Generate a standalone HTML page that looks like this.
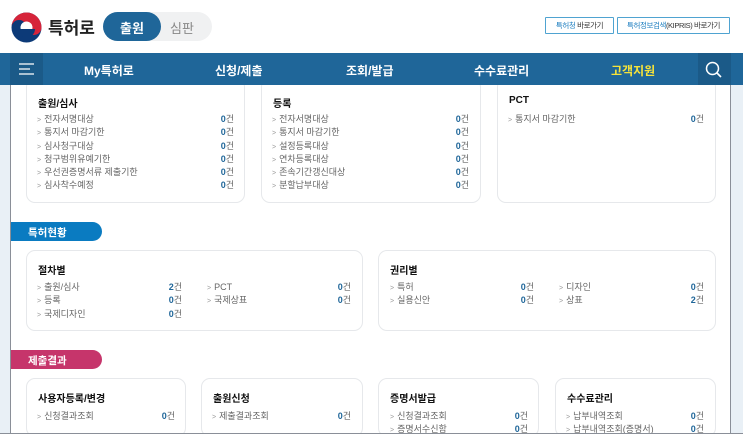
<!DOCTYPE html>
<html><head><meta charset="utf-8"><style>
*{margin:0;padding:0;box-sizing:border-box}
html{width:743px;height:437px;overflow:hidden}
body{width:743px;height:437px;overflow:hidden;background:#fff;font-family:"Liberation Sans","Noto Sans CJK KR",sans-serif;position:relative}
.abs{position:absolute}
.nav{left:0;top:53px;width:743px;height:32px;background:#1f6699;z-index:5}
.nav span{position:absolute;top:9px;color:#fff;font-size:12px;font-weight:bold}
.side{background:#e9f0f6;top:85px;height:348px}
.panel{left:10px;top:85px;width:721px;height:348px;background:#fff;border-left:1px solid #8a8f98;border-right:1px solid #8a8f98}
.card{position:absolute;border:1px solid #e6e8eb;border-radius:9px;background:#fff}
.card h4{position:absolute;left:11px;font-size:10px;color:#111;font-weight:bold}
.row{position:absolute;font-size:9px;color:#666;white-space:nowrap}
.row i{font-style:normal;color:#999;font-size:7px;margin-right:3px}
.row span,.num span{display:block;height:13.3px;line-height:13.3px}
.num{position:absolute;font-size:9px;color:#666;text-align:right}
.num b{color:#1f6699}
.pill{position:absolute;left:11px;width:91px;height:19px;border-radius:0 10px 10px 0;color:#fff;font-size:10.5px;font-weight:bold;padding:3px 0 0 17px}
.btn{position:absolute;top:17px;height:17px;border:1px solid #4fa3d1;font-size:7.5px;color:#333;padding:0 2px;line-height:15px;border-radius:1px;white-space:nowrap;letter-spacing:-0.4px;text-align:center}
.btn em{font-style:normal;color:#1f7fc0}
</style></head><body>
<div class="abs side" style="left:0;width:10px"></div>
<div class="abs side" style="left:731px;width:12px"></div>
<div class="abs panel"></div>

<div class="card" style="left:26px;top:78px;width:219px;height:125px"><h4 style="top:16px">출원/심사</h4></div>
<div class="card" style="left:261px;top:78px;width:220px;height:125px"><h4 style="top:16px">등록</h4></div>
<div class="card" style="left:497px;top:78px;width:219px;height:125px"><h4 style="top:16px">PCT</h4></div>

<div class="pill" style="top:222px;background:#0a7bc1">특허현황</div>
<div class="card" style="left:26px;top:250px;width:337px;height:81px"><h4 style="top:11px">절차별</h4></div>
<div class="card" style="left:378px;top:250px;width:338px;height:81px"><h4 style="top:11px">권리별</h4></div>

<div class="pill" style="top:350px;background:#c6356b">제출결과</div>
<div class="card" style="left:26px;top:378px;width:160px;height:59px"><h4 style="top:11px">사용자등록/변경</h4></div>
<div class="card" style="left:201px;top:378px;width:162px;height:59px"><h4 style="top:11px">출원신청</h4></div>
<div class="card" style="left:378px;top:378px;width:161px;height:59px"><h4 style="top:11px">증명서발급</h4></div>
<div class="card" style="left:555px;top:378px;width:161px;height:59px"><h4 style="top:11px">수수료관리</h4></div>

<div class="row" style="left:37px;top:113px"><span><i>&gt;</i>전자서명대상</span><span><i>&gt;</i>통지서 마감기한</span><span><i>&gt;</i>심사청구대상</span><span><i>&gt;</i>청구범위유예기한</span><span><i>&gt;</i>우선권증명서류 제출기한</span><span><i>&gt;</i>심사착수예정</span></div>
<div class="num" style="left:200px;width:34px;top:113px"><span><b>0</b>건</span><span><b>0</b>건</span><span><b>0</b>건</span><span><b>0</b>건</span><span><b>0</b>건</span><span><b>0</b>건</span></div>
<div class="row" style="left:272px;top:113px"><span><i>&gt;</i>전자서명대상</span><span><i>&gt;</i>통지서 마감기한</span><span><i>&gt;</i>설정등록대상</span><span><i>&gt;</i>연차등록대상</span><span><i>&gt;</i>존속기간갱신대상</span><span><i>&gt;</i>분할납부대상</span></div>
<div class="num" style="left:435px;width:34px;top:113px"><span><b>0</b>건</span><span><b>0</b>건</span><span><b>0</b>건</span><span><b>0</b>건</span><span><b>0</b>건</span><span><b>0</b>건</span></div>
<div class="row" style="left:508px;top:113px"><span><i>&gt;</i>통지서 마감기한</span></div>
<div class="num" style="left:670px;width:34px;top:113px"><span><b>0</b>건</span></div>

<div class="row" style="left:37px;top:281px"><span><i>&gt;</i>출원/심사</span><span><i>&gt;</i>등록</span><span><i>&gt;</i>국제디자인</span></div>
<div class="num" style="left:148px;width:34px;top:281px"><span><b>2</b>건</span><span><b>0</b>건</span><span><b>0</b>건</span></div>
<div class="row" style="left:207px;top:281px"><span><i>&gt;</i>PCT</span><span><i>&gt;</i>국제상표</span></div>
<div class="num" style="left:317px;width:34px;top:281px"><span><b>0</b>건</span><span><b>0</b>건</span></div>
<div class="row" style="left:390px;top:281px"><span><i>&gt;</i>특허</span><span><i>&gt;</i>실용신안</span></div>
<div class="num" style="left:500px;width:34px;top:281px"><span><b>0</b>건</span><span><b>0</b>건</span></div>
<div class="row" style="left:559px;top:281px"><span><i>&gt;</i>디자인</span><span><i>&gt;</i>상표</span></div>
<div class="num" style="left:670px;width:34px;top:281px"><span><b>0</b>건</span><span><b>2</b>건</span></div>

<div class="row" style="left:37px;top:410px"><span><i>&gt;</i>신청결과조회</span></div>
<div class="num" style="left:141px;width:34px;top:410px"><span><b>0</b>건</span></div>
<div class="row" style="left:212px;top:410px"><span><i>&gt;</i>제출결과조회</span></div>
<div class="num" style="left:317px;width:34px;top:410px"><span><b>0</b>건</span></div>
<div class="row" style="left:390px;top:410px;height:23px;overflow:hidden"><span><i>&gt;</i>신청결과조회</span><span><i>&gt;</i>증명서수신함</span></div>
<div class="num" style="left:494px;width:34px;top:410px;height:23px;overflow:hidden"><span><b>0</b>건</span><span><b>0</b>건</span></div>
<div class="row" style="left:566px;top:410px;height:23px;overflow:hidden"><span><i>&gt;</i>납부내역조회</span><span><i>&gt;</i>납부내역조회(증명서)</span></div>
<div class="num" style="left:670px;width:34px;top:410px;height:23px;overflow:hidden"><span><b>0</b>건</span><span><b>0</b>건</span></div>

<div class="abs" style="left:0;top:433px;width:743px;height:4px;background:#fff;border-top:1px solid #8a8f98;z-index:6"></div>

<div class="abs" style="left:0;top:0;width:743px;height:53px;background:#fff;z-index:5"></div>
<svg class="abs" style="left:10px;top:11px;z-index:6" width="33" height="33" viewBox="0 0 33 33">
<circle cx="16.5" cy="16.5" r="15" fill="#0c3a78"/>
<path d="M1.5 16.5A15 15 0 0 1 31.5 16.5A7.5 7.5 0 0 1 16.5 16.5A7.5 7.5 0 0 0 1.5 16.5Z" fill="#d6243a"/>
<circle cx="16.5" cy="16.5" r="6" fill="#fff"/>
<path d="M8 18a8.5 8.5 0 0 0 17 0" fill="#0c3a78"/>
</svg>
<div class="abs" style="left:48px;top:14px;font-size:17px;font-weight:bold;color:#222;z-index:6">특허로</div>
<div class="abs" style="left:103px;top:12px;width:109px;height:29px;border-radius:15px;background:#f0f1f2;z-index:6"></div>
<div class="abs" style="left:103px;top:12px;width:58px;height:29px;border-radius:15px;background:#1f6699;color:#fff;font-size:13px;font-weight:bold;text-align:center;padding-top:6px;z-index:6">출원</div>
<div class="abs" style="left:170px;top:18px;font-size:13px;color:#888;z-index:6">심판</div>
<div class="btn" style="left:545px;width:69px;z-index:6"><em>특허청</em> 바로가기</div>
<div class="btn" style="left:617px;width:113px;z-index:6"><em>특허정보검색</em>(KIPRIS) 바로가기</div>

<div class="abs nav">
<div class="abs" style="left:10px;top:0;width:33px;height:32px;background:#1b5a88"></div>
<svg class="abs" style="left:19px;top:10px" width="15" height="12"><path d="M0 1H15M0 6H11M0 11H15" stroke="#fff" stroke-width="1.3"/></svg>
<span style="left:84px">My특허로</span><span style="left:215px">신청/제출</span><span style="left:346px">조회/발급</span><span style="left:474px">수수료관리</span><span style="left:611px;color:#f6e33a">고객지원</span>
<div class="abs" style="left:698px;top:0;width:33px;height:32px;background:#1b5a88"></div>
<svg class="abs" style="left:705px;top:8px" width="17" height="17"><circle cx="7.5" cy="7.5" r="6" fill="none" stroke="#fff" stroke-width="1.5"/><path d="M12 12L16 16" stroke="#fff" stroke-width="1.6"/></svg>
</div>
</body></html>
